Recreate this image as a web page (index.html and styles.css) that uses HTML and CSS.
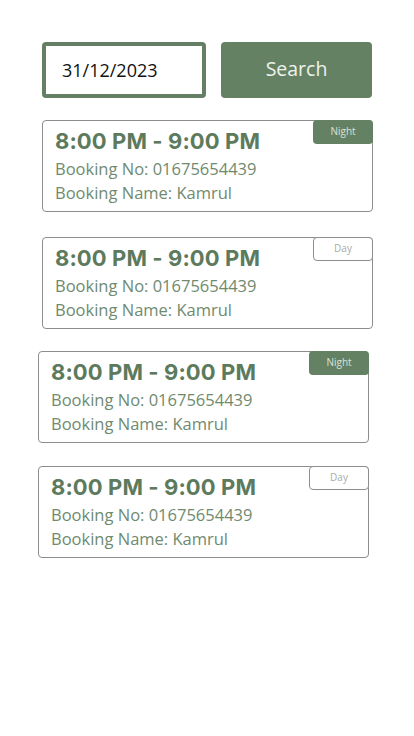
FILE: index.html
```html
<!DOCTYPE html>
<html>
<head>
<meta charset="utf-8">
<link rel="stylesheet" href="styles.css">
</head>
<body>
<div class="page">
  <div class="search-row">
    <div class="date-box">31/12/2023</div>
    <button class="search-btn">Search</button>
  </div>
  <div class="list">
    <div class="card">
      <div class="badge night">Night</div>
      <div class="time">8:00 PM - 9:00 PM</div>
      <div class="line">Booking No: 01675654439</div>
      <div class="line">Booking Name: Kamrul</div>
    </div>
    <div class="card gap-lg">
      <div class="badge day">Day</div>
      <div class="time">8:00 PM - 9:00 PM</div>
      <div class="line">Booking No: 01675654439</div>
      <div class="line">Booking Name: Kamrul</div>
    </div>
    <div class="card shift">
      <div class="badge night">Night</div>
      <div class="time">8:00 PM - 9:00 PM</div>
      <div class="line">Booking No: 01675654439</div>
      <div class="line">Booking Name: Kamrul</div>
    </div>
    <div class="card shift">
      <div class="badge day">Day</div>
      <div class="time">8:00 PM - 9:00 PM</div>
      <div class="line">Booking No: 01675654439</div>
      <div class="line">Booking Name: Kamrul</div>
    </div>
  </div>
</div>
</body>
</html>
```
FILE: styles.css
```css
html, body {
  margin: 0;
  padding: 0;
  background: #ffffff;
}
body {
  font-family: "Open Sans", "Liberation Sans", sans-serif;
  width: 414px;
  height: 736px;
  overflow: hidden;
}
.page {
  padding: 42px 42px 0 42px;
}
.search-row {
  display: flex;
  gap: 15px;
  height: 56px;
}
.date-box {
  box-sizing: border-box;
  width: 165px;
  height: 56px;
  border: 4px solid #657f65;
  border-radius: 4px;
  padding-left: 16px;
  display: flex;
  align-items: center;
  font-size: 18px;
  color: #111;
}
.search-btn {
  flex: 0 0 151px;
  height: 56px;
  border: none;
  border-radius: 4px;
  background: #658163;
  color: #eef2ec;
  font-family: "Open Sans", "Liberation Sans", sans-serif;
  font-size: 19.5px;
  padding: 0 0 3px 0;
}
.list {
  display: flex;
  flex-direction: column;
  margin-top: 22px;
  gap: 25px;
}
.card {
  position: relative;
  box-sizing: border-box;
  width: 331px;
  height: 92px;
  border: 1px solid #8a8f8a;
  border-radius: 4px;
  padding: 5px 0 0 12px;
}
.card.shift {
  margin-left: -4px;
  margin-top: -3px;
}
.card.shift + .card.shift {
  margin-top: -2px;
}
.time {
  font-family: "Inter", "Liberation Sans", sans-serif;
  font-weight: 700;
  font-size: 22px;
  color: #5d7a5d;
  line-height: 30px;
  letter-spacing: 0.1px;
  margin-bottom: 1px;
}
.line {
  font-size: 16.5px;
  color: #6f8a6f;
  line-height: 24px;
}
.badge {
  position: absolute;
  top: -1px;
  right: -1px;
  box-sizing: border-box;
  width: 60px;
  height: 24px;
  border-radius: 4px;
  font-size: 10px;
  text-align: center;
  line-height: 22px;
}
.badge.night {
  background: #658163;
  color: #d9e2d6;
  line-height: 22px;
}
.badge.day {
  border: 1px solid #8a8f8a;
  color: #a8aca8;
  background: #fff;
  line-height: 20px;
}
```
